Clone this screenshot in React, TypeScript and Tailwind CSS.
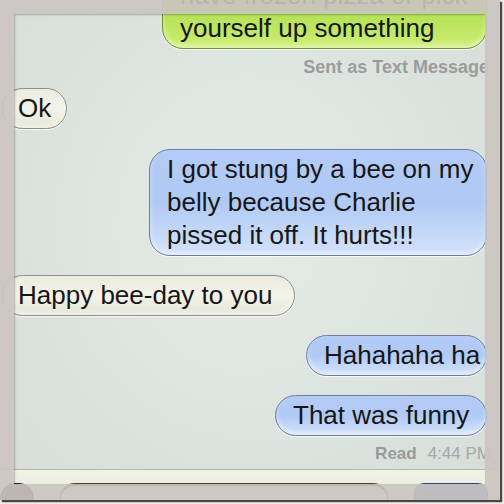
import React from 'react';

const font = { fontFamily: '"Liberation Sans", Arial, sans-serif' };

function Bubble({
  side,
  tone,
  width,
  className = '',
  children,
}: {
  side: 'left' | 'right';
  tone: 'green' | 'blue' | 'grey';
  width: string;
  className?: string;
  children: React.ReactNode;
}) {
  const toneClass =
    tone === 'green'
      ? 'bg-gradient-to-b from-[#98d23e] via-[#b4e052] to-[#cdee74] border-[#6d8f3e]'
      : tone === 'blue'
        ? 'bg-gradient-to-b from-[#b3cbf6] via-[#b0caf5] to-[#d3e2fb] border-[#6c7f9a]'
        : 'bg-gradient-to-b from-[#ebebdf] via-[#f3f3ea] to-[#e4e5d6] border-[#8f8f82]';
  const sideClass =
    side === 'right' ? 'self-end mr-[13px] pl-[17px]' : 'self-start ml-[2px] pl-[15px]';
  return (
    <div
      className={`${sideClass} ${toneClass} ${width} ${className} border rounded-[21px] py-[3px] text-[26px] leading-[33px] text-[#161616] whitespace-nowrap shadow-[inset_0_-3px_5px_rgba(255,255,255,0.45),0_1px_1px_rgba(255,255,255,0.8)]`}
    >
      {children}
    </div>
  );
}

export default function App() {
  return (
    <div className="w-[504px] h-[504px] bg-[#ece9e7]" style={font}>
      <div className="relative w-[500px] h-[500px] overflow-hidden bg-[radial-gradient(ellipse_at_50%_45%,#e4ece7,#d6ddd9)] shadow-[2px_2px_1px_rgba(50,40,40,0.85)]">
        <div className="flex flex-col">
          <Bubble side="right" tone="green" width="w-[325px]" className="mt-[-25px]">
            have frozen pizza or pick
            <br />
            yourself up something
          </Bubble>

          <div className="self-end mr-[11px] mt-[9px] text-[18px] leading-[18px] font-bold text-[#9c9c9c] whitespace-nowrap">
            Sent as Text Message
          </div>

          <Bubble side="left" tone="grey" width="w-[65px]" className="mt-[12px]">
            Ok
          </Bubble>

          <Bubble side="right" tone="blue" width="w-[338px]" className="mt-[20px]">
            I got stung by a bee on my
            <br />
            belly because Charlie
            <br />
            pissed it off. It hurts!!!
          </Bubble>

          <Bubble side="left" tone="grey" width="w-[293px]" className="mt-[19px]">
            Happy bee-day to you
          </Bubble>

          <Bubble side="right" tone="blue" width="w-[181px]" className="mt-[19px]">
            Hahahaha ha
          </Bubble>

          <Bubble side="right" tone="blue" width="w-[212px]" className="mt-[19px]">
            That was funny
          </Bubble>

          <div className="self-end mr-[9px] mt-[8px] flex gap-[11px] text-[17px] leading-[20px] whitespace-nowrap">
            <span className="font-bold text-[#9a9a9a]">Read</span>
            <span className="text-[#a6a6a6]">4:44 PM</span>
          </div>

          {/* input bar */}
          <div className="mt-[5px] border-t border-[#b3b7aa] bg-gradient-to-b from-[#f0f3e4] to-[#e4e7d8] pt-[13px] pb-[6px] flex items-start gap-[26px] pr-[12px]">
            <div className="w-[34px] h-[30px] rounded-full bg-[#3d3936] border border-[#1f1c1a]" />
            <div className="w-[330px] h-[30px] rounded-[15px] bg-[#f4f2ee] border-t-[3px] border-x border-b border-[#4c4038]" />
            <div className="ml-auto w-[74px] h-[30px] rounded-[10px] bg-gradient-to-b from-[#5c7ecb] to-[#3d61b3] border border-[#2d4780]" />
          </div>
        </div>

        {/* photo frame */}
        <div className="absolute inset-0 border-t-[14px] border-l-[14px] border-r-[15px] border-b-[16px] border-[rgba(203,196,193,0.9)] shadow-[inset_1px_1px_2px_rgba(0,0,0,0.25)]" />
      </div>
    </div>
  );
}
